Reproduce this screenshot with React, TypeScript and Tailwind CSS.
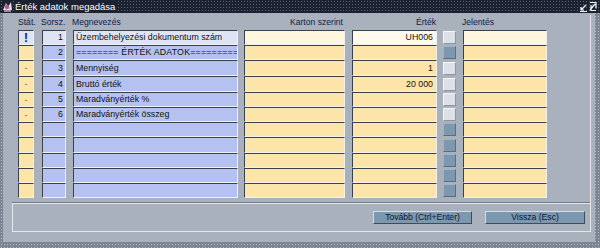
import React from "react";

type RowT = { stat: string; n: string; name: string; val: string; cb: "light" | "dark"; cur?: boolean; h: string };

const rows: RowT[] = [
  { stat: "!", n: "1", name: "Üzembehelyezési dokumentum szám", val: "UH006", cb: "light", cur: true, h: "h-[15px]" },
  { stat: "", n: "2", name: "======== ÉRTÉK ADATOK=========", val: "", cb: "dark", h: "h-[15px]" },
  { stat: "-", n: "3", name: "Mennyiség", val: "1", cb: "light", h: "h-[16px]" },
  { stat: "-", n: "4", name: "Bruttó érték", val: "20 000", cb: "light", h: "h-[16px]" },
  { stat: "-", n: "5", name: "Maradványérték %", val: "", cb: "light", h: "h-[15px]" },
  { stat: "-", n: "6", name: "Maradványérték összeg", val: "", cb: "light", h: "h-[15px]" },
  { stat: "", n: "", name: "", val: "", cb: "dark", h: "h-[15px]" },
  { stat: "", n: "", name: "", val: "", cb: "dark", h: "h-[16px]" },
  { stat: "", n: "", name: "", val: "", cb: "dark", h: "h-[15px]" },
  { stat: "", n: "", name: "", val: "", cb: "dark", h: "h-[15px]" },
  { stat: "", n: "", name: "", val: "", cb: "dark", h: "h-[15px]" },
];

const bevel =
  "border border-t-[#3a414d] border-l-[#3a414d] border-b-[#eef1f5] border-r-[#eef1f5] overflow-hidden whitespace-nowrap";

function Row({ r }: { r: RowT }) {
  const blue = r.cur ? "bg-[#dfe4f4]" : "bg-[#b5c1f1]";
  const yellow = r.cur ? "bg-[#fff6de]" : "bg-[#fde5aa]";
  return (
    <div className={`flex ${r.h} text-[8.8px] leading-none text-[#111]`}>
      <div className={`w-[16px] ${bevel} ${r.cur ? "bg-[#dfe4f4]" : "bg-[#fde5aa]"} flex items-center justify-center`}>
        {r.stat === "!" ? (
          <span className="text-[#0b1a6e] font-bold text-[12px]">!</span>
        ) : r.stat === "-" ? (
          <span className="text-[#3a3020] text-[8px]">-</span>
        ) : null}
      </div>
      <div className={`w-[24px] ml-[8px] ${bevel} ${blue} flex items-center justify-end pr-[2px]`}>{r.n}</div>
      <div className={`w-[165px] ml-[7px] ${bevel} ${blue} flex items-center pl-[2px]`}>
        <span className={r.n === "2" ? "tracking-[0.2px]" : ""}>{r.name}</span>
      </div>
      <div className={`w-[101px] ml-[6px] ${bevel} ${yellow}`}></div>
      <div className={`w-[85px] ml-[7px] ${bevel} ${r.cur ? "bg-[#fffaec]" : "bg-[#fde5aa]"} flex items-center justify-end pr-[3px]`}>
        {r.val}
      </div>
      <div className="w-[13px] ml-[6px] flex items-center">
        <div
          className={`w-[13px] h-[13px] border ${
            r.cb === "light"
              ? "bg-[#dde0e7] border-t-[#f6f7fa] border-l-[#f6f7fa] border-b-[#8d95a2] border-r-[#8d95a2]"
              : "bg-[#7c97ae] border-t-[#9fb3c4] border-l-[#9fb3c4] border-b-[#5a6e80] border-r-[#5a6e80]"
          }`}
        ></div>
      </div>
      <div className={`w-[84px] ml-[7px] ${bevel} ${yellow}`}></div>
    </div>
  );
}

export default function App() {
  return (
    <div
      className="w-[600px] h-[248px] flex flex-col bg-[#7d8593] bg-[radial-gradient(circle,#b4bac4_0.8px,transparent_0.9px)] bg-[length:3px_3px] overflow-hidden"
      style={{ fontFamily: '"Liberation Sans", Arial, sans-serif' }}
    >
      {/* title bar */}
      <div className="h-[13px] flex items-center bg-[#1c2232] bg-[radial-gradient(circle,#5b6273_0.8px,transparent_0.9px)] bg-[length:3px_3px] shrink-0">
        <svg width="11" height="11" viewBox="0 0 11 11" className="ml-[2px]">
          <rect x="0" y="0" width="11" height="11" fill="#1c2232" />
          <path d="M1 9 L4 2 L6 6 L9 1 L10 9 Z" fill="#e8d9e8" />
          <circle cx="5" cy="6" r="2.2" fill="#c0557f" />
          <path d="M2 10 L9 10" stroke="#ffffff" strokeWidth="1" />
        </svg>
        <span className="ml-[2px] text-white text-[9.5px] leading-none bg-[#1c2232] pr-[2px] h-[13px] flex items-center">Érték adatok megadása</span>
        <div className="flex-1" />
        <svg width="18" height="11" viewBox="0 0 18 11" className="mr-[3px]">
          <path d="M2 9 L7 4 M2 9 L2 6 M2 9 L5 9" stroke="#fff" strokeWidth="1.2" fill="none" />
          <path d="M1 10.5 L8 10.5" stroke="#fff" strokeWidth="1" />
          <path d="M11 1.5 L17 1.5 L17 7.5 M11 9 L16 3 M12 4 L12 9.5 L17 9.5" stroke="#fff" strokeWidth="1.2" fill="none" />
        </svg>
      </div>
      {/* body */}
      <div className="flex-1 ml-[3px] mr-[5px] mb-[6px] bg-[#a9b2bc] pt-[2px] pl-[9px] pr-[4px] pb-[10px] flex flex-col">
        <div className="flex-1 flex flex-col border-r border-r-[#e4e8ee]">
          {/* grid area */}
          <div className="pl-[6px] flex flex-col">
            <div className="h-[15px] flex items-center text-[8.6px] leading-none text-[#0e1a4c] pb-[1px]">
              <div className="w-[16px]">Stát.</div>
              <div className="w-[24px] ml-[7px] pl-0">Sorsz.</div>
              <div className="w-[165px] ml-[7px]">Megnevezés</div>
              <div className="w-[101px] ml-[6px] text-right pr-[1px]">Karton szerint</div>
              <div className="w-[85px] ml-[7px] text-right">Érték</div>
              <div className="w-[13px] ml-[6px]"></div>
              <div className="w-[84px] ml-[7px]">Jelentés</div>
            </div>
            <div className="flex flex-col">
              {rows.map((r, i) => (
                <Row key={i} r={r} />
              ))}
            </div>
          </div>
          <div className="flex-1" />
          {/* button area */}
          <div className="h-[30px] border-t border-t-[#6f7884] shrink-0">
            <div className="h-full border-t border-t-[#e4e8ee] border-l border-l-[#e4e8ee] border-b border-b-[#e4e8ee] flex items-center justify-end pr-[5px] pb-[1px]">
              <button className="w-[99px] h-[13px] bg-[#7b98ae] border border-t-[#d2dce5] border-l-[#d2dce5] border-b-[#3e4b58] border-r-[#3e4b58] text-[8.6px] leading-none text-[#0d1630] flex items-center justify-center">
                Tovább (Ctrl+Enter)
              </button>
              <button className="w-[100px] h-[13px] ml-[13px] bg-[#7b98ae] border border-t-[#d2dce5] border-l-[#d2dce5] border-b-[#3e4b58] border-r-[#3e4b58] text-[8.6px] leading-none text-[#0d1630] flex items-center justify-center">
                Vissza (Esc)
              </button>
            </div>
          </div>
        </div>
      </div>
    </div>
  );
}
